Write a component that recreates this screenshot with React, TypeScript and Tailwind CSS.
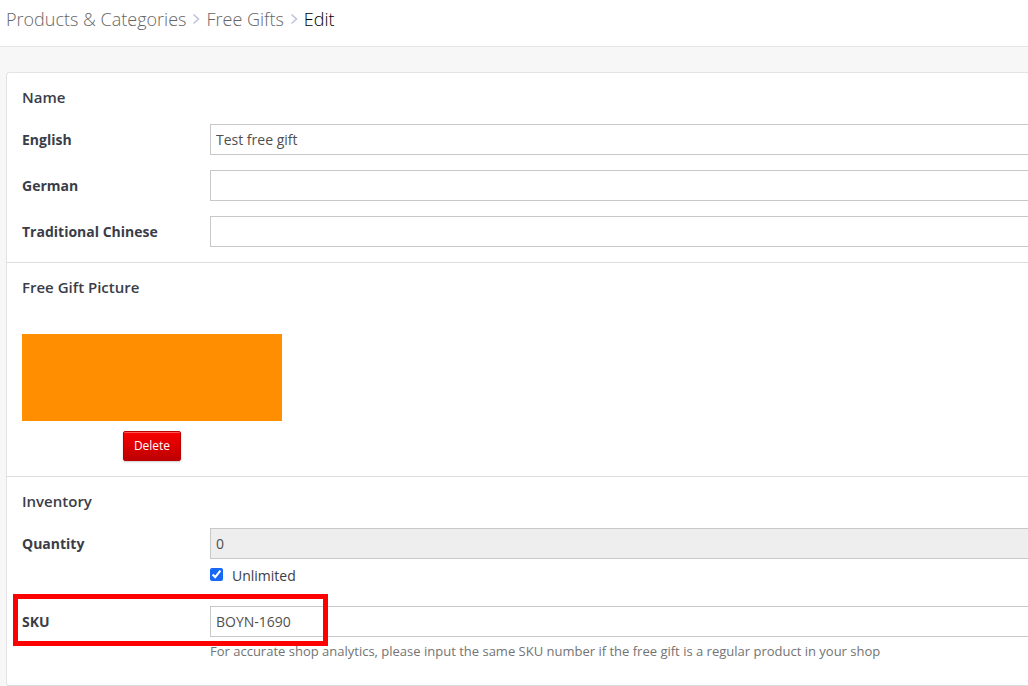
import { useState } from 'react'
import type { ReactNode } from 'react'

const crumbs = ['Products & Categories', 'Free Gifts']

const languages = [
  { id: 'name-en', label: 'English', value: 'Test free gift' },
  { id: 'name-de', label: 'German', value: '' },
  { id: 'name-zh', label: 'Traditional Chinese', value: '' },
]

const inputClass =
  'block w-full h-[31px] border border-r-0 border-[#c8c8c8] bg-white px-[5px] text-sm text-[#4f4f4f] outline-none disabled:bg-[#eeeeee]'

function Breadcrumb() {
  return (
    <nav className="flex h-[47px] items-start gap-1.5 border-b border-[#e5e5e5] bg-white px-1.5 pt-[5px] text-lg leading-7 font-light text-[#666666]">
      {crumbs.map(crumb => (
        <span key={crumb} className="flex items-center gap-1.5">
          <a href="#">{crumb}</a>
          <svg className="h-3 w-2" viewBox="0 0 8 12" fill="none" stroke="#c0c4dc" strokeWidth="1.6">
            <path d="M1.5 1.5 6.5 6 1.5 10.5" />
          </svg>
        </span>
      ))}
      <span className="text-black">Edit</span>
    </nav>
  )
}

function Section({ title, children }: { title: string; children: ReactNode }) {
  return (
    <section className="border-b border-[#dddddd] pt-3.5 pb-[15px] pl-[15px]">
      <h2 className="mb-[17px] text-[15px] leading-5 font-semibold">{title}</h2>
      {children}
    </section>
  )
}

function Field({ id, label, children }: { id: string; label: string; children: ReactNode }) {
  return (
    <div className="relative flex">
      <label htmlFor={id} className="w-[188px] shrink-0 text-sm leading-[31px] font-bold">
        {label}
      </label>
      <div className="min-w-0 flex-1">{children}</div>
    </div>
  )
}

export default function App() {
  const [names, setNames] = useState(languages.map(l => l.value))
  const [unlimited, setUnlimited] = useState(true)
  const [quantity, setQuantity] = useState('0')
  const [sku, setSku] = useState('BOYN-1690')

  return (
    <div className="min-h-screen bg-[#f7f7f7] font-['Open_Sans',sans-serif] text-[#3a3d48]">
      <Breadcrumb />

      <main className="pt-[25px] pl-1.5">
        <div className="rounded-l border-t border-l border-[#e3e3e3] bg-white">
          <Section title="Name">
            <div className="flex flex-col gap-[15px]">
              {languages.map((lang, i) => (
                <Field key={lang.id} id={lang.id} label={lang.label}>
                  <input
                    id={lang.id}
                    type="text"
                    className={inputClass}
                    value={names[i]}
                    onChange={e => setNames(names.map((n, j) => (j === i ? e.target.value : n)))}
                  />
                </Field>
              ))}
            </div>
          </Section>

          <Section title="Free Gift Picture">
            <div className="flex w-[260px] flex-col items-center gap-2.5 pt-5">
              <div className="h-[87px] w-full bg-[#ff8f00]" />
              <button
                type="button"
                className="h-[30px] rounded-xs border border-[#b80000] bg-linear-to-b from-[#fa0000] to-[#bd0000] px-2.5 text-xs text-white shadow-[inset_0_1px_0_rgba(255,255,255,0.35),0_1px_2px_rgba(0,0,0,0.2)]"
              >
                Delete
              </button>
            </div>
          </Section>

          <Section title="Inventory">
            <Field id="quantity" label="Quantity">
              <input
                id="quantity"
                type="text"
                className={inputClass}
                value={quantity}
                disabled={unlimited}
                onChange={e => setQuantity(e.target.value)}
              />
              <label className="mt-[7px] mb-5 flex items-center gap-[9px] text-sm leading-5">
                <input
                  type="checkbox"
                  className="mb-1 h-[13px] w-[13px] accent-[#1668f5]"
                  checked={unlimited}
                  onChange={e => setUnlimited(e.target.checked)}
                />
                Unlimited
              </label>
            </Field>
            <Field id="sku" label="SKU">
              <input
                id="sku"
                type="text"
                className={inputClass}
                value={sku}
                onChange={e => setSku(e.target.value)}
              />
              <p className="mt-1 mb-[9px] text-[13px] leading-5 text-[#737373]">
                For accurate shop analytics, please input the same SKU number if the free gift is a regular product in your shop
              </p>
              {/* callout around the SKU row */}
              <div className="pointer-events-none absolute -top-3 -left-[9px] h-[52px] w-[315px] border-5 border-[#ff0000]" />
            </Field>
          </Section>
        </div>
      </main>
    </div>
  )
}
